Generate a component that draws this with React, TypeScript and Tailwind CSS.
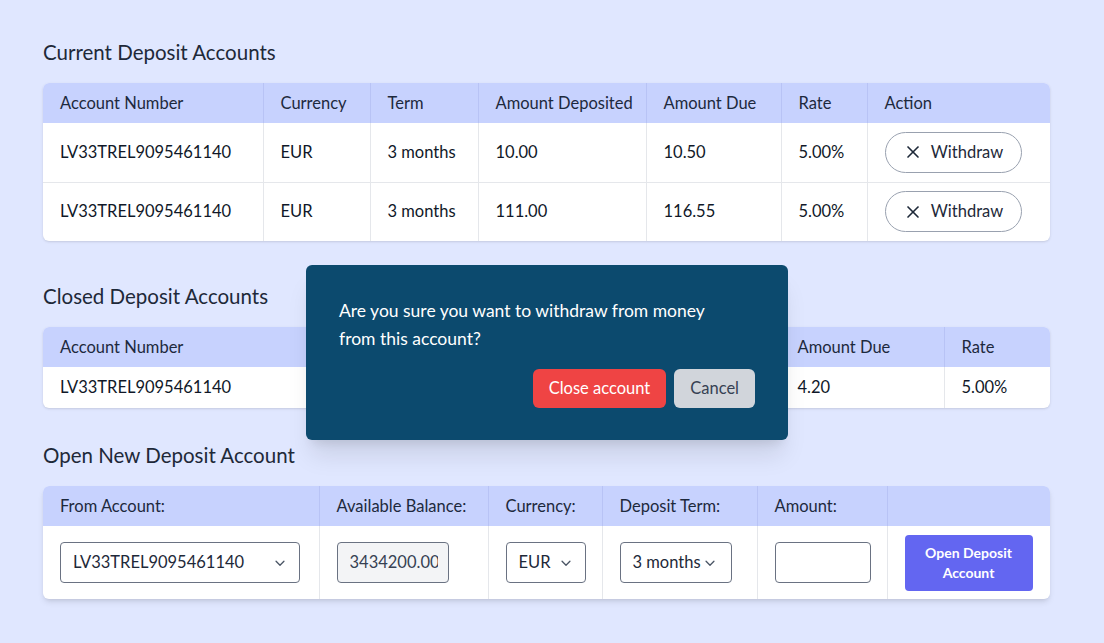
import { X } from "lucide-react";

const font = { fontFamily: "Lato, 'Noto Sans', sans-serif" };

function Chevron() {
  return (
    <svg width="14" height="14" viewBox="0 0 16 16" fill="none" className="text-gray-600">
      <path d="M3.5 6l4.5 4.5L12.5 6" stroke="currentColor" strokeWidth="1.5" strokeLinecap="round" strokeLinejoin="round" />
    </svg>
  );
}

const th = "px-[17px] h-10 text-left font-normal whitespace-nowrap overflow-hidden text-slate-800 border-l border-[#b8c3f5] first:border-l-0";
const td = "px-[17px] text-left text-gray-900 whitespace-nowrap border-l border-gray-200 first:border-l-0";

const current = [
  { acc: "LV33TREL9095461140", cur: "EUR", term: "3 months", dep: "10.00", due: "10.50", rate: "5.00%" },
  { acc: "LV33TREL9095461140", cur: "EUR", term: "3 months", dep: "111.00", due: "116.55", rate: "5.00%" },
];

export default function App() {
  return (
    <div className="min-h-[643px] bg-[#e0e7ff] relative" style={font}>
      <div className="w-[1007px] ml-[43px] pt-[38px] pb-10">
        <h2 className="text-[20.5px] leading-7 text-gray-800 mb-[17px]">Current Deposit Accounts</h2>
        <div className="bg-white rounded-md overflow-hidden shadow-sm">
          <table className="w-full table-fixed border-collapse text-[16.5px]">
            <colgroup>
              <col className="w-[220px]" />
              <col className="w-[107px]" />
              <col className="w-[108px]" />
              <col className="w-[168px]" />
              <col className="w-[135px]" />
              <col className="w-[86px]" />
              <col className="w-[183px]" />
            </colgroup>
            <thead className="bg-[#c7d2fe]">
              <tr>
                <th className={th}>Account Number</th>
                <th className={th}>Currency</th>
                <th className={th}>Term</th>
                <th className={th}>Amount Deposited</th>
                <th className={th}>Amount Due</th>
                <th className={th}>Rate</th>
                <th className={th}>Action</th>
              </tr>
            </thead>
            <tbody>
              {current.map((r, i) => (
                <tr key={i} className="h-[59px] border-t border-gray-200 first:border-t-0">
                  <td className={td}>{r.acc}</td>
                  <td className={td}>{r.cur}</td>
                  <td className={td}>{r.term}</td>
                  <td className={td}>{r.dep}</td>
                  <td className={td}>{r.due}</td>
                  <td className={td}>{r.rate}</td>
                  <td className={td}>
                    <button className="flex items-center gap-2 h-[41px] w-[137px] justify-center rounded-full border border-gray-400 bg-white text-gray-800">
                      <X size={20} strokeWidth={2} className="text-gray-800" />
                      <span>Withdraw</span>
                    </button>
                  </td>
                </tr>
              ))}
            </tbody>
          </table>
        </div>

        <h2 className="text-[20.5px] leading-7 text-gray-800 mt-[41px] mb-[17px]">Closed Deposit Accounts</h2>
        <div className="bg-white rounded-md overflow-hidden shadow-sm">
          <table className="w-full table-fixed border-collapse text-[16.5px]">
            <colgroup>
              <col className="w-[275px]" />
              <col className="w-[120px]" />
              <col className="w-[130px]" />
              <col className="w-[212px]" />
              <col className="w-[164px]" />
              <col className="w-[106px]" />
            </colgroup>
            <thead className="bg-[#c7d2fe]">
              <tr>
                <th className={th}>Account Number</th>
                <th className={th}>Currency</th>
                <th className={th}>Term</th>
                <th className={th}>Amount Deposited</th>
                <th className={th}>Amount Due</th>
                <th className={th}>Rate</th>
              </tr>
            </thead>
            <tbody>
              <tr className="h-[41px]">
                <td className={td}>LV33TREL9095461140</td>
                <td className={td}>EUR</td>
                <td className={td}>3 months</td>
                <td className={td}>4.00</td>
                <td className={td}>4.20</td>
                <td className={td}>5.00%</td>
              </tr>
            </tbody>
          </table>
        </div>

        <h2 className="text-[20.5px] leading-7 text-gray-800 mt-[33px] mb-[17px]">Open New Deposit Account</h2>
        <div className="bg-white rounded-md overflow-hidden shadow-md">
          <table className="w-full table-fixed border-collapse text-[16.5px]">
            <colgroup>
              <col className="w-[276px]" />
              <col className="w-[169px]" />
              <col className="w-[114px]" />
              <col className="w-[155px]" />
              <col className="w-[130px]" />
              <col className="w-[163px]" />
            </colgroup>
            <thead className="bg-[#c7d2fe]">
              <tr>
                <th className={th}>From Account:</th>
                <th className={th}>Available Balance:</th>
                <th className={th}>Currency:</th>
                <th className={th}>Deposit Term:</th>
                <th className={th}>Amount:</th>
                <th className={th}></th>
              </tr>
            </thead>
            <tbody>
              <tr className="h-[73px]">
                <td className={td}>
                  <div className="flex items-center justify-between w-[240px] h-[41px] border border-gray-500 rounded pl-3 pr-3 text-gray-800">
                    <span>LV33TREL9095461140</span>
                    <Chevron />
                  </div>
                </td>
                <td className={td}>
                  <div className="w-[112px] h-[41px] flex items-center overflow-hidden border border-gray-500 rounded bg-gray-100 pl-3 text-gray-700">
                    <span className="block w-[88px] overflow-hidden">3434200.00</span>
                  </div>
                </td>
                <td className={td}>
                  <div className="flex items-center gap-2 w-[80px] h-[41px] border border-gray-500 rounded pl-3 text-gray-800">
                    <span>EUR</span>
                    <Chevron />
                  </div>
                </td>
                <td className={td}>
                  <div className="flex items-center gap-0.5 w-[112px] h-[41px] border border-gray-500 rounded pl-3 text-gray-800">
                    <span>3 months</span>
                    <Chevron />
                  </div>
                </td>
                <td className={td}>
                  <div className="w-[96px] h-[41px] border border-gray-500 rounded bg-white" />
                </td>
                <td className={td}>
                  <button className="w-[128px] h-[56px] rounded bg-[#6366f1] text-white text-sm font-bold leading-5">
                    Open Deposit
                    <br />
                    Account
                  </button>
                </td>
              </tr>
            </tbody>
          </table>
        </div>
      </div>

      <div className="absolute left-[306px] top-[265px] w-[482px] rounded-md bg-[#0c4a6e] px-[33px] pt-8 pb-8 shadow-xl">
        <p className="text-[17.5px] leading-7 text-white w-[395px]">
          Are you sure you want to withdraw from money from this account?
        </p>
        <div className="flex justify-end gap-2 mt-4">
          <button className="h-[39px] px-4 rounded-md bg-[#ef4444] text-white text-[16.5px]">Close account</button>
          <button className="h-[39px] px-4 rounded-md bg-[#d1d5db] text-gray-700 text-[16.5px]">Cancel</button>
        </div>
      </div>
    </div>
  );
}
